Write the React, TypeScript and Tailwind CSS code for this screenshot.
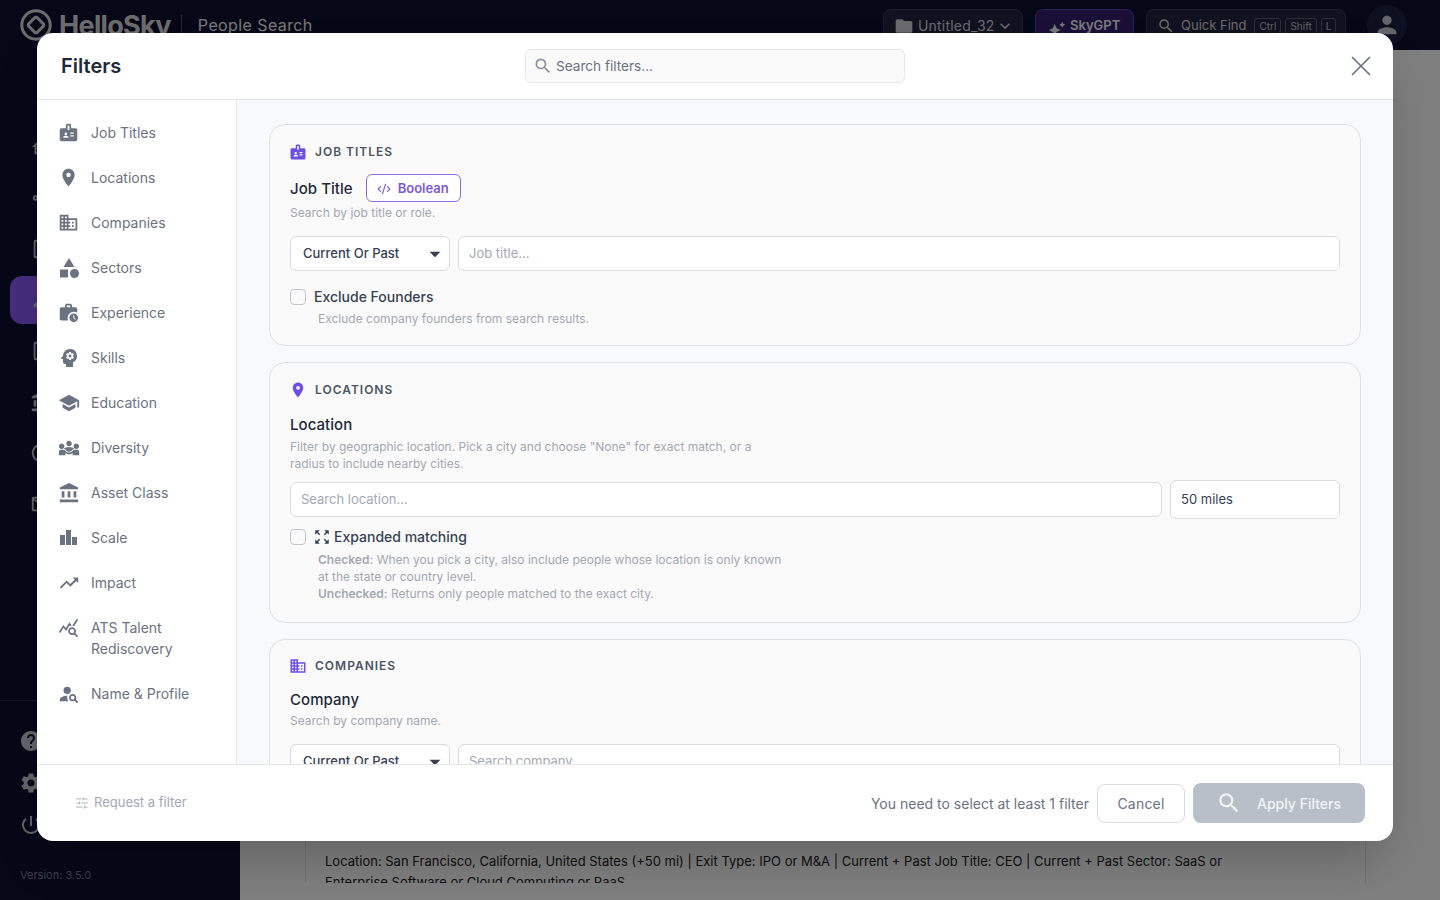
import type { ReactNode } from "react";
import { CodeXml, SlidersHorizontal, X } from "lucide-react";
import {
  MdAccountBalance,
  MdArrowDropDown,
  MdAutoAwesome,
  MdBadge,
  MdCategory,
  MdDiversity3,
  MdDomain,
  MdExpandMore,
  MdFolder,
  MdHelp,
  MdLocationOn,
  MdMailOutline,
  MdOutlineDescription,
  MdOutlineHome,
  MdOutlineInfo,
  MdOutlineShare,
  MdPerson,
  MdPersonSearch,
  MdPowerSettingsNew,
  MdPsychology,
  MdQueryStats,
  MdSchool,
  MdSearch,
  MdSettings,
  MdTrendingUp,
  MdWorkHistory,
  MdZoomOutMap,
} from "react-icons/md";

// ─── Background app ───────────────────────────────────────────────────────────

const Logo = () => (
  <svg viewBox="0 0 32 32" className="w-8 h-8 shrink-0 text-[#d8d8dc]" fill="none" stroke="currentColor">
    <circle cx="16" cy="16" r="14.2" strokeWidth="3" />
    <rect x="10" y="10" width="12" height="12" rx="2" strokeWidth="3" transform="rotate(45 16 16)" />
  </svg>
);

const Kbd = ({ children }: { children: ReactNode }) => (
  <span className="border border-[#5b5d70] rounded-[3px] px-1 text-[10px] leading-[14px] text-[#c0c2cc]">{children}</span>
);

const AppHeader = () => (
  <div className="h-[50px] shrink-0 flex items-center pl-5 pr-[33px] bg-[#0d1030]">
    <Logo />
    <span className="ml-[7px] text-[27px] font-bold text-[#d8d8dc] leading-none tracking-tight">HelloSky</span>
    <span className="ml-[10px] w-px h-5 bg-[#4a4c60]" />
    <span className="ml-4 text-base text-[#f0f0f4] tracking-[0.4px]">People Search</span>
    <div className="ml-auto flex items-start gap-3 self-start pt-[9px]">
      <div className="w-[140px] h-[34px] rounded-lg border border-[#3a3d58] bg-[#22243e] flex items-center pl-[10px] text-[#d4d5da] text-sm tracking-[0.2px]">
        <MdFolder size={20} />
        <span className="ml-1">Untitled_32</span>
        <MdExpandMore size={20} />
      </div>
      <div className="w-[99px] h-[34px] rounded-lg border border-[#5a3fb0] bg-[#34206e] flex items-center pl-3 text-[#f2f2f6] text-[13px] font-semibold">
        <MdAutoAwesome size={18} className="mt-2" />
        <span className="ml-1">SkyGPT</span>
      </div>
      <div className="w-[200px] h-[34px] rounded-lg border border-[#3a3d58] bg-[#22243e] flex items-center pl-[10px] text-[#d4d5da] text-[13px]">
        <MdSearch size={18} />
        <span className="ml-[6px] mr-2">Quick Find</span>
        <span className="flex gap-1">
          <Kbd>Ctrl</Kbd>
          <Kbd>Shift</Kbd>
          <Kbd>L</Kbd>
        </span>
      </div>
    </div>
    <div className="ml-[21px] w-10 h-10 rounded-full bg-[#1b2140] flex items-center justify-center text-[#c8cad4]">
      <MdPerson size={28} />
    </div>
  </div>
);

const railIcons = [MdOutlineHome, MdOutlineShare, MdOutlineDescription, MdPerson, MdOutlineDescription, MdAccountBalance, MdOutlineInfo, MdMailOutline];

const AppSidebar = () => (
  <div className="w-[240px] shrink-0 flex flex-col bg-[#0d1030]">
    <div className="h-[650px] pt-[73px] pl-[10px] pr-3 flex flex-col gap-[3px] text-[#c8cad4]">
      {railIcons.map((Icon, idx) => (
        <div key={idx} className={`h-12 rounded-xl flex items-center pl-5 ${idx === 3 ? "bg-[#8f5aff]" : ""}`}>
          <Icon size={22} />
        </div>
      ))}
    </div>
    <div className="border-t border-[#2c2e48] pt-[28px] pl-[19px] flex flex-col gap-[18px] text-[#c8cad4]">
      <MdHelp size={24} />
      <MdSettings size={24} />
      <MdPowerSettingsNew size={24} />
    </div>
    <p className="mt-[30px] pl-5 text-[11px] text-[#77798a]">Version: 3.5.0</p>
  </div>
);

const AppMain = () => (
  <div className="flex-1 bg-white">
    <div className="ml-[65px] mt-[740px] w-[1061px] h-[93px] overflow-hidden border-x border-[#e5e5e5] pt-[61px] pl-[19px] pr-5">
      <p className="text-[13px] leading-[21px] text-[#222] max-w-[920px]">
        Location: San Francisco, California, United States (+50 mi) | Exit Type: IPO or M&amp;A | Current + Past Job Title: CEO | Current + Past Sector: SaaS or Enterprise Software or Cloud Computing or PaaS
      </p>
    </div>
  </div>
);

// ─── Filter modal ─────────────────────────────────────────────────────────────

const ScaleIcon = ({ size = 21 }: { size?: number }) => (
  <svg viewBox="0 0 21 21" width={size} height={size} className="shrink-0" fill="currentColor">
    <rect x="2" y="8" width="5" height="10" />
    <rect x="8" y="3" width="5" height="15" />
    <rect x="14" y="10" width="5" height="8" />
  </svg>
);

type NavItem = { label: string; Icon: (props: { size?: number; className?: string }) => ReactNode; size?: number };

const navItems: NavItem[] = [
  { label: "Job Titles", Icon: MdBadge },
  { label: "Locations", Icon: MdLocationOn },
  { label: "Companies", Icon: MdDomain },
  { label: "Sectors", Icon: MdCategory, size: 24 },
  { label: "Experience", Icon: MdWorkHistory },
  { label: "Skills", Icon: MdPsychology, size: 24 },
  { label: "Education", Icon: MdSchool, size: 22 },
  { label: "Diversity", Icon: MdDiversity3, size: 22 },
  { label: "Asset Class", Icon: MdAccountBalance, size: 22 },
  { label: "Scale", Icon: ScaleIcon },
  { label: "Impact", Icon: MdTrendingUp, size: 22 },
  { label: "ATS Talent Rediscovery", Icon: MdQueryStats },
  { label: "Name & Profile", Icon: MdPersonSearch, size: 22 },
];

const FilterNav = () => (
  <div className="w-[200px] shrink-0 border-r border-[#e5e7eb] pt-[10px] pl-[21px] pr-4">
    {navItems.map(({ label, Icon, size = 21 }) => (
      <div key={label} className="flex items-start gap-[12px] py-3 text-sm leading-[21px] text-[#6b7280]">
        <span className="w-[21px] h-[21px] shrink-0 flex items-center justify-center">
          <Icon size={size} className="shrink-0" />
        </span>
        <span>{label}</span>
      </div>
    ))}
  </div>
);

type CardProps = {
  title: string;
  icon: ReactNode;
  className: string;
  children: ReactNode;
};

const Card = ({ title, icon, className, children }: CardProps) => (
  <div className={`rounded-2xl border border-[#dfe1e4] bg-[#fafafa] px-5 ${className}`}>
    <div className="flex items-center gap-[8px] h-[18px] -ml-px text-[#6d4fe8]">
      {icon}
      <span className="text-xs font-semibold tracking-[1px] uppercase text-[#4b5563]">{title}</span>
    </div>
    {children}
  </div>
);

const Help = ({ children, className = "" }: { children: ReactNode; className?: string }) => (
  <p className={`text-xs leading-[17px] text-[#a3a8b2] ${className}`}>{children}</p>
);

const Checkbox = () => <span className="w-4 h-4 shrink-0 rounded-[4px] border border-[#c4c8ce] bg-[#fafafa]" />;

const SelectBox = () => (
  <div className="w-[160px] h-[35px] shrink-0 rounded-md border border-[#d9dbdf] bg-white flex items-center pl-3 pr-px text-[13px] font-medium text-[#374151]">
    <span className="flex-1">Current Or Past</span>
    <MdArrowDropDown size={26} className="text-[#374151]" />
  </div>
);

const TextBox = ({ placeholder }: { placeholder: string }) => (
  <div className="flex-1 h-[35px] rounded-md border border-[#d9dbdf] bg-white flex items-center px-[10px] text-[13px] text-[#a3a8b2]">
    {placeholder}
  </div>
);

const FilterContent = () => (
  <div className="flex-1 h-full overflow-hidden bg-[#f8f9fb] px-8 pt-6 flex flex-col gap-4">
    <Card title="Job Titles" icon={<MdBadge size={18} />} className="pt-[18px]">
      <div className="mt-[13px] flex items-center gap-[13px] h-7">
        <span className="pt-[2px] text-[15px] font-medium text-[#1f2937] tracking-[0.05px]">Job Title</span>
        <span className="w-[95px] h-7 rounded-md border border-[#8b6be0] bg-white flex items-center pl-[10px] pt-[2px] gap-[7px] text-[13px] font-semibold text-[#7c5ad9]">
          <CodeXml size={14} />
          Boolean
        </span>
      </div>
      <Help className="mt-[2px]">Search by job title or role.</Help>
      <div className="mt-[15px] flex gap-2">
        <SelectBox />
        <TextBox placeholder="Job title..." />
      </div>
      <div className="mt-[18px] flex items-center gap-2 h-4">
        <Checkbox />
        <span className="text-sm font-medium text-[#374151]">Exclude Founders</span>
      </div>
      <Help className="mt-[5px] ml-7 pb-[18px]">Exclude company founders from search results.</Help>
    </Card>

    <Card title="Locations" icon={<MdLocationOn size={18} />} className="pt-[18px]">
      <p className="mt-[14px] text-[15px] leading-6 font-medium text-[#1f2937] tracking-[0.05px]">Location</p>
      <Help className="mt-[1px] max-w-[480px]">
        Filter by geographic location. Pick a city and choose "None" for exact match, or a radius to include nearby cities.
      </Help>
      <div className="mt-[8px] flex items-center gap-2">
        <TextBox placeholder="Search location..." />
        <div className="w-[170px] h-[39px] rounded-md border border-[#d9dbdf] bg-white flex items-center px-[10px] text-[13px] text-[#374151]">
          50 miles
        </div>
      </div>
      <div className="mt-[10px] flex items-center h-4">
        <Checkbox />
        <MdZoomOutMap size={18} className="ml-[7px] text-[#374151]" />
        <span className="ml-[3px] text-sm font-medium text-[#374151]">Expanded matching</span>
      </div>
      <Help className="mt-[6px] ml-7 max-w-[470px] pb-[20px]">
        <b className="font-semibold">Checked:</b> When you pick a city, also include people whose location is only known at the state or country level.
        <br />
        <b className="font-semibold">Unchecked:</b> Returns only people matched to the exact city.
      </Help>
    </Card>

    <Card title="Companies" icon={<MdDomain size={18} />} className="pt-[17px]">
      <p className="mt-[13px] text-[15px] leading-6 font-medium text-[#1f2937] tracking-[0.05px]">Company</p>
      <Help className="mt-0">Search by company name.</Help>
      <div className="mt-[15px] flex gap-2">
        <SelectBox />
        <TextBox placeholder="Search company..." />
      </div>
    </Card>
  </div>
);

const FilterModal = () => (
  <div className="absolute left-[37px] top-[33px] w-[1356px] h-[808px] rounded-2xl bg-white overflow-hidden flex flex-col shadow-2xl">
    <div className="h-[67px] shrink-0 border-b border-[#e5e7eb] flex items-center relative px-6">
      <h2 className="text-xl font-semibold text-[#1f2937]">Filters</h2>
      <div className="absolute left-[488px] top-4 w-[380px] h-[34px] rounded-md border border-[#e5e7eb] bg-[#fafafa] flex items-center pl-[7px] gap-[3px] text-[13.6px] text-[#6b7280]">
        <MdSearch size={20} className="text-[#8b9099]" />
        Search filters...
      </div>
      <X size={34} strokeWidth={1.2} className="absolute right-[15px] top-4 text-[#6b7280]" />
    </div>
    <div className="h-[664px] shrink-0 flex">
      <FilterNav />
      <FilterContent />
    </div>
    <div className="flex-1 border-t border-[#e5e7eb] flex items-center pl-[38px] pr-7">
      <SlidersHorizontal size={14} strokeWidth={1.5} className="text-[#a3a8b2]" />
      <span className="ml-[5px] text-[13px] text-[#a3a8b2]">Request a filter</span>
      <span className="ml-auto mt-[2px] text-sm text-[#6b7280]">You need to select at least 1 filter</span>
      <span className="ml-2 w-[88px] h-[39px] pt-[2px] rounded-lg border border-[#d9dbdf] flex items-center justify-center text-sm tracking-[0.2px] text-[#6b7280]">
        Cancel
      </span>
      <span className="ml-2 w-[172px] h-10 rounded-lg bg-[#b9bfc9] flex items-center pl-[23px] text-sm font-medium text-[#f3f4f6]">
        <MdSearch size={26} />
        <span className="ml-[15px] mt-[2px]">Apply Filters</span>
      </span>
    </div>
  </div>
);

export default function App() {
  return (
    <div className="relative w-[1440px] h-[900px] overflow-hidden flex flex-col font-['Inter',sans-serif]">
      <AppHeader />
      <div className="flex-1 flex min-h-0">
        <AppSidebar />
        <AppMain />
      </div>
      <div className="absolute inset-0 bg-black/50" />
      <FilterModal />
    </div>
  );
}
